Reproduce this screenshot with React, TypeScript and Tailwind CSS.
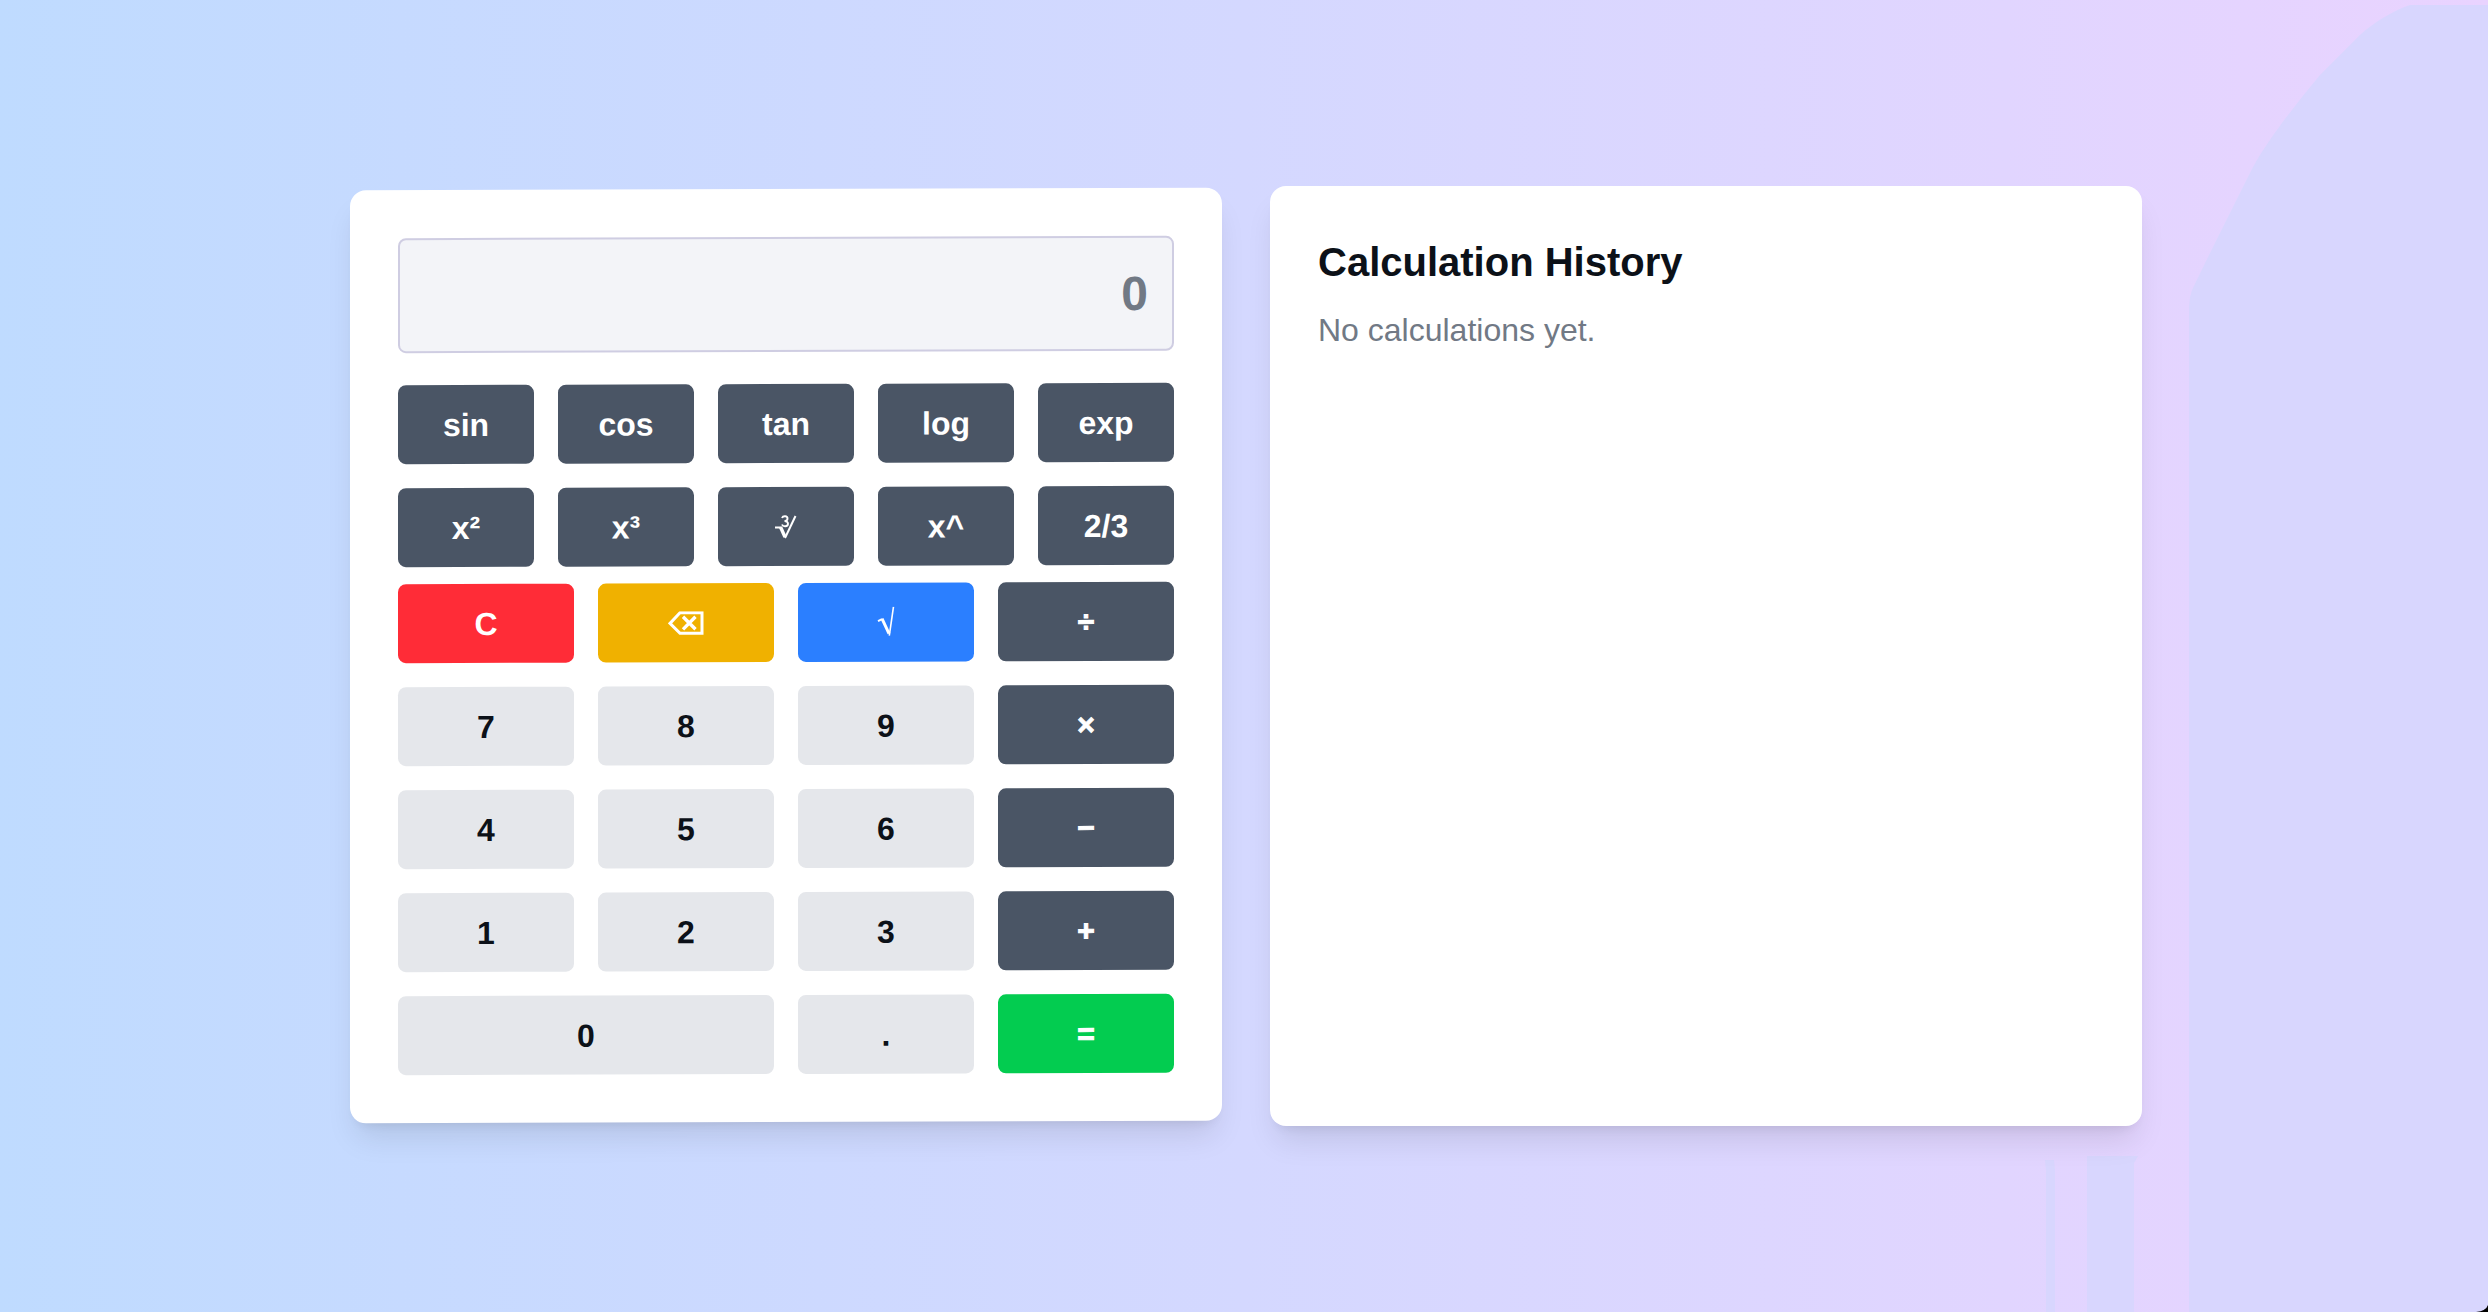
import type { ReactNode } from "react";

type Tone = "dark" | "light" | "red" | "yellow" | "blue" | "green";

type Key = {
  id: string;
  content: ReactNode;
  tone: Tone;
  wide?: boolean;
  operator?: boolean;
};

const tones: Record<Tone, string> = {
  dark: "bg-gray-600 text-white",
  light: "bg-gray-200 text-[#0c1118]",
  red: "bg-[#ff2c37] text-white",
  yellow: "bg-[#f0b100] text-white",
  blue: "bg-[#2b7fff] text-white",
  green: "bg-[#03cc50] text-white",
};

function BackspaceIcon() {
  return (
    <svg className="h-6 w-9" viewBox="0 0 36 24" fill="none" stroke="white" aria-hidden="true">
      <path d="M12 1.500H34V22H12L2 12Z" strokeWidth="3" />
      <path d="M15 5.500L27.500 18M27.500 5.500L15 18" strokeWidth="3.400" />
    </svg>
  );
}

function SquareRootIcon() {
  return (
    <svg className="h-8 w-[18px]" viewBox="0 0 18 32" fill="none" stroke="white" aria-hidden="true">
      <path d="M1 14.500L5 12.500" strokeWidth="2" />
      <path d="M5 12L12 27" strokeWidth="3" />
      <path d="M12.300 29L16.500 0" strokeWidth="1.600" />
    </svg>
  );
}

function CubeRootIcon() {
  return (
    <svg className="h-6 w-[22px]" viewBox="0 0 22 24" fill="none" stroke="white" aria-hidden="true">
      <path d="M0 12.500H6" strokeWidth="2" />
      <path d="M5.500 12L10 22" strokeWidth="3.400" />
      <path d="M10 23L20.500 1" strokeWidth="2" />
      <path
        d="M7 3C8 .5 12.500 .8 12.500 3.500C12.500 5.500 11 6 9.500 6C11.500 6 13 7 13 8.800C13 12 8 12 7 9.500"
        strokeWidth="1.900"
      />
    </svg>
  );
}

const functionKeys: Key[] = [
  { id: "sin", content: "sin", tone: "dark" },
  { id: "cos", content: "cos", tone: "dark" },
  { id: "tan", content: "tan", tone: "dark" },
  { id: "log", content: "log", tone: "dark" },
  { id: "exp", content: "exp", tone: "dark" },
  { id: "square", content: "x²", tone: "dark" },
  { id: "cube", content: "x³", tone: "dark" },
  { id: "cube root", content: <CubeRootIcon />, tone: "dark" },
  { id: "power", content: "x^", tone: "dark" },
  { id: "two thirds", content: "2/3", tone: "dark" },
];

const mainKeys: Key[] = [
  { id: "clear", content: "C", tone: "red" },
  { id: "backspace", content: <BackspaceIcon />, tone: "yellow" },
  { id: "square root", content: <SquareRootIcon />, tone: "blue" },
  { id: "divide", content: "÷", tone: "dark", operator: true },
  { id: "7", content: "7", tone: "light" },
  { id: "8", content: "8", tone: "light" },
  { id: "9", content: "9", tone: "light" },
  { id: "multiply", content: "×", tone: "dark", operator: true },
  { id: "4", content: "4", tone: "light" },
  { id: "5", content: "5", tone: "light" },
  { id: "6", content: "6", tone: "light" },
  { id: "subtract", content: "−", tone: "dark", operator: true },
  { id: "1", content: "1", tone: "light" },
  { id: "2", content: "2", tone: "light" },
  { id: "3", content: "3", tone: "light" },
  { id: "add", content: "+", tone: "dark", operator: true },
  { id: "0", content: "0", tone: "light", wide: true },
  { id: "decimal point", content: ".", tone: "light" },
  { id: "equals", content: "=", tone: "green", operator: true },
];

function KeyButton({ k }: { k: Key }) {
  const face = k.operator
    ? "text-[30px] leading-12 [-webkit-text-stroke:1px_white]"
    : "text-[32px] leading-12";
  return (
    <button
      type="button"
      aria-label={k.id}
      className={`flex h-[79px] items-center justify-center rounded-lg font-bold ${face} ${tones[k.tone]} ${k.wide ? "col-span-2" : ""}`}
    >
      {k.content}
    </button>
  );
}

function Backdrop() {
  return (
    <svg
      className="absolute top-0 right-0 h-full w-[488px]"
      viewBox="0 0 488 1312"
      preserveAspectRatio="none"
      aria-hidden="true"
    >
      <g fill="#d8d6fe">
        <path d="M488 5H410C390 12 372 24 360 35L320 75C295 105 268 140 253 167L210 253L192 290Q189 298 189 307V1312H488Z" />
        <path d="M45 1160H54L55 1170V1312H46V1170Z" />
        <path d="M87 1156H138L134 1163V1312H87Z" />
      </g>
      <path d="M488 1305Q486 1311 476 1312H488Z" fill="#000" />
    </svg>
  );
}

const card =
  "min-w-0 flex-1 rounded-2xl bg-white p-12 shadow-[0_20px_30px_-6px_rgba(0,0,0,0.1),0_8px_12px_-8px_rgba(0,0,0,0.1)]";

export default function App() {
  return (
    <main className="relative flex min-h-screen items-center justify-center overflow-hidden bg-linear-to-r from-[#bfdbff] via-[#d4d8ff] to-[#e9d3ff] pl-1 font-['Liberation_Sans',Arial,sans-serif]">
      <Backdrop />
      <div className="relative flex w-full max-w-[1792px] gap-12">
        <section aria-label="Calculator" className={`${card} mt-[3px] mb-1 -skew-y-[0.18deg]`}>
          <input
            type="text"
            readOnly
            placeholder="0"
            aria-label="Display"
            className="mb-8 block h-[115px] w-full rounded-lg border-2 border-[#cfcde2] bg-[#f3f4f8] px-6 text-right text-5xl font-bold text-[#0c1118] placeholder:text-[#717985]"
          />
          <div className="mb-[17px] grid grid-cols-5 gap-6">
            {functionKeys.map((k) => (
              <KeyButton key={k.id} k={k} />
            ))}
          </div>
          <div className="grid grid-cols-4 gap-6">
            {mainKeys.map((k) => (
              <KeyButton key={k.id} k={k} />
            ))}
          </div>
        </section>
        <section className={card}>
          <h2 className="mb-4 text-[40px] leading-14 font-bold text-[#0c1118]">Calculation History</h2>
          <p className="text-[32px] leading-12 text-[#717985]">No calculations yet.</p>
        </section>
      </div>
    </main>
  );
}
